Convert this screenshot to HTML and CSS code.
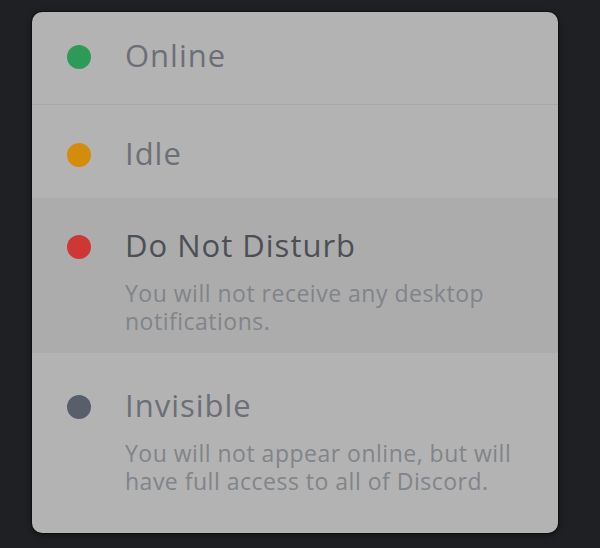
FILE: index.html
```html
<!DOCTYPE html>
<html lang="en">
<head>
    <meta charset="UTF-8">
    <meta name="viewport" content="width=device-width, initial-scale=1.0">
    <title>Set Status</title>
    <link rel="stylesheet" href="styles.css">
</head>
<body>
    <div class="status-menu">
        <div class="status status-online">
            <span class="dot"></span>
            <div class="info">
                <div class="label">Online</div>
            </div>
        </div>
        <div class="status status-idle">
            <span class="dot"></span>
            <div class="info">
                <div class="label">Idle</div>
            </div>
        </div>
        <div class="status status-dnd active">
            <span class="dot"></span>
            <div class="info">
                <div class="label">Do Not Disturb</div>
                <div class="desc">You will not receive any desktop notifications.</div>
            </div>
        </div>
        <div class="status status-invisible">
            <span class="dot"></span>
            <div class="info">
                <div class="label">Invisible</div>
                <div class="desc">You will not appear online, but will have full access to all of Discord.</div>
            </div>
        </div>
    </div>
</body>
</html>
```

FILE: styles.css
```css
:root {
    --page-bg: #1f2023;
    --menu-bg: #b3b3b3;
    --menu-active: #acacac;
    --label-color: #6c6f77;
    --desc-color: #818489;
}

body {
    font-family: 'Open Sans', Lato, sans-serif;
    background-color: var(--page-bg);
    margin: 0;
    padding: 12px 0 0 32px;
    height: 536px;
}

.status-menu {
    width: 526px;
    height: 521px;
    background-color: var(--menu-bg);
    border-radius: 10px;
    overflow: hidden;
    box-shadow: 0 0 0 1px rgba(0,0,0,0.35), 0 2px 6px rgba(0,0,0,0.5);
}

.status {
    display: grid;
    grid-template-columns: 24px 1fr;
    column-gap: 34px;
    padding-left: 35px;
}

.status-online {
    padding-top: 25px;
    padding-bottom: 31px;
    border-bottom: 1px solid #a8a8a8;
}

.status-idle {
    padding-top: 30px;
    padding-bottom: 27px;
}

.status-dnd {
    padding-top: 29px;
    padding-bottom: 18px;
}

.status-invisible {
    padding-top: 34px;
    padding-bottom: 38px;
}

.status.active {
    background-color: var(--menu-active);
}

.dot {
    width: 24px;
    height: 24px;
    margin-top: 8px;
    border-radius: 50%;
}

.status-online .dot { background-color: #2e9a5a; }
.status-idle .dot { background-color: #d38c0c; }
.status-dnd .dot { background-color: #cf3636; }
.status-invisible .dot { background-color: #585e6a; }

.label {
    font-size: 31px;
    font-weight: 500;
    line-height: 36px;
    letter-spacing: 1px;
    color: var(--label-color);
}

.active .label {
    color: #4c4f55;
}

.desc {
    margin-top: 16px;
    font-size: 23px;
    font-weight: 500;
    line-height: 28px;
    letter-spacing: 0.5px;
    color: var(--desc-color);
    max-width: 395px;
}
```
